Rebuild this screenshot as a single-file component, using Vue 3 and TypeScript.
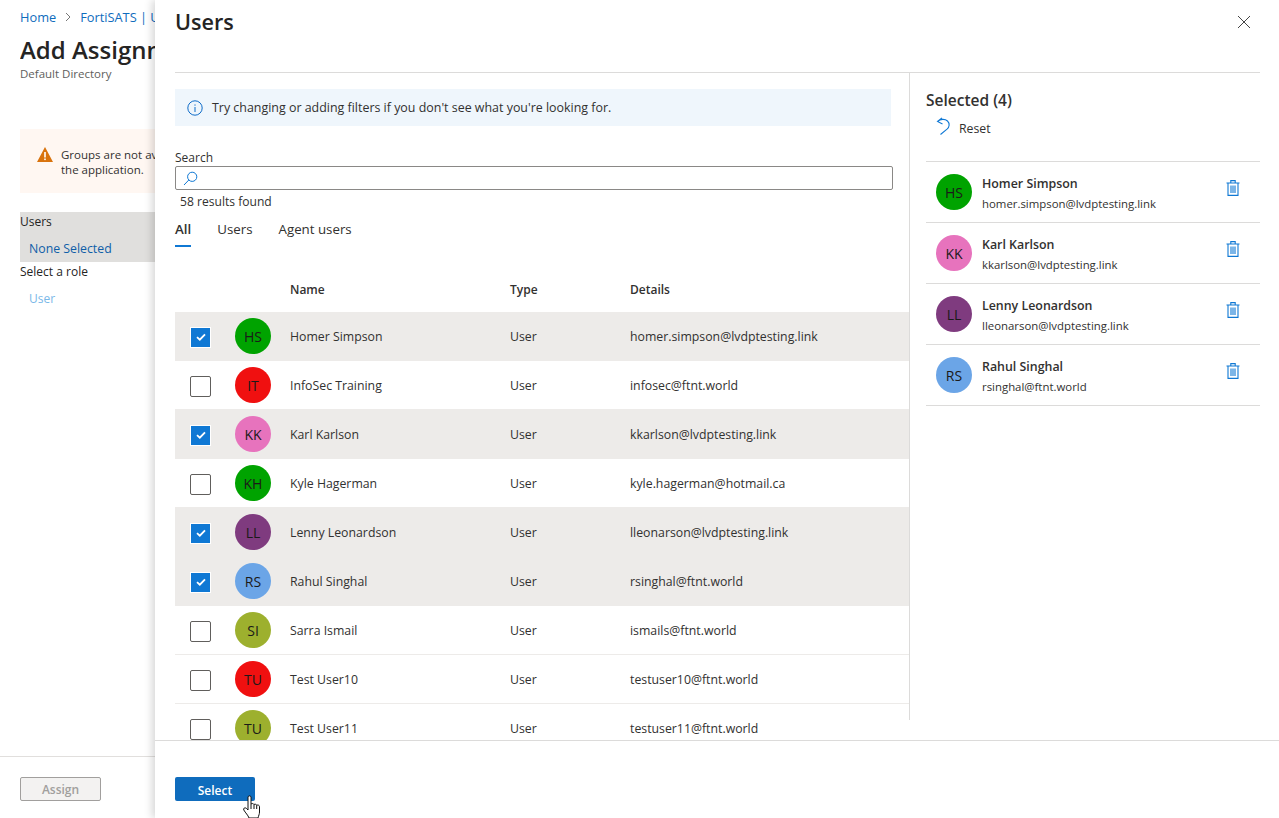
<script setup lang="ts">
interface Person { initials: string; name: string; email: string; color: string; selected: boolean }
const people: Person[] = [
  { initials: 'HS', name: 'Homer Simpson', email: 'homer.simpson@lvdptesting.link', color: '#00a300', selected: true },
  { initials: 'IT', name: 'InfoSec Training', email: 'infosec@ftnt.world', color: '#f01010', selected: false },
  { initials: 'KK', name: 'Karl Karlson', email: 'kkarlson@lvdptesting.link', color: '#e773bd', selected: true },
  { initials: 'KH', name: 'Kyle Hagerman', email: 'kyle.hagerman@hotmail.ca', color: '#00a300', selected: false },
  { initials: 'LL', name: 'Lenny Leonardson', email: 'lleonarson@lvdptesting.link', color: '#7f3b7f', selected: true },
  { initials: 'RS', name: 'Rahul Singhal', email: 'rsinghal@ftnt.world', color: '#6ba5e7', selected: true },
  { initials: 'SI', name: 'Sarra Ismail', email: 'ismails@ftnt.world', color: '#9db02e', selected: false },
  { initials: 'TU', name: 'Test User10', email: 'testuser10@ftnt.world', color: '#f01010', selected: false },
  { initials: 'TU', name: 'Test User11', email: 'testuser11@ftnt.world', color: '#9db02e', selected: false },
]
const chosen = people.filter((p) => p.selected)
</script>

<template>
  <div class="page">
    <section class="back">
      <nav class="crumbs">
        <span class="link">Home</span>
        <svg class="chev" width="8" height="10" viewBox="0 0 8 10"><path d="M2 1l4 4-4 4" fill="none" stroke="#777" stroke-width="1" /></svg>
        <span class="link clip">FortiSATS | Users and groups</span>
      </nav>
      <h1>Add Assignment</h1>
      <div class="dir">Default Directory</div>
      <div class="warn">
        <svg width="16" height="15" viewBox="0 0 16 15"><path d="M8 0l8 15H0z" fill="#d9730d" /><rect x="7.2" y="5" width="1.6" height="5.500" fill="#fff" /><rect x="7.2" y="11.500" width="1.6" height="1.6" fill="#fff" /></svg>
        <div class="warn-text">Groups are not available for assignment due to your Active Directory plan level.<br />the application.</div>
      </div>
      <div class="pick">
        <div class="pick-label">Users</div>
        <div class="pick-value">None Selected</div>
      </div>
      <div class="role-label">Select a role</div>
      <div class="role-value">User</div>
      <div class="back-spacer"></div>
      <footer class="back-foot">
        <button class="assign">Assign</button>
      </footer>
    </section>

    <aside class="panel">
      <header class="head">
        <h2>Users</h2>
        <svg class="close" width="14" height="14" viewBox="0 0 14 14"><path d="M1 1l12 12M13 1L1 13" stroke="#444" stroke-width="1" fill="none" /></svg>
      </header>
      <div class="body">
        <div class="left">
          <div class="info">
            <svg width="16" height="16" viewBox="0 0 16 16"><circle cx="8" cy="8" r="7.2" fill="none" stroke="#0f6cc8" stroke-width="1" /><rect x="7.500" y="7" width="1" height="5" fill="#0f6cc8" /><rect x="7.500" y="4.400" width="1" height="1.300" fill="#0f6cc8" /></svg>
            <span>Try changing or adding filters if you don't see what you're looking for.</span>
          </div>
          <label class="search-label">Search</label>
          <div class="search">
            <svg width="15" height="15" viewBox="0 0 15 15"><circle cx="9.200" cy="5.800" r="4.600" fill="none" stroke="#0f78d4" stroke-width="1" /><path d="M5.800 9L1 14" stroke="#0f78d4" stroke-width="1" fill="none" /></svg>
          </div>
          <div class="count">58 results found</div>
          <div class="tabs">
            <span class="tab on">All</span>
            <span class="tab">Users</span>
            <span class="tab">Agent users</span>
          </div>
          <div class="thead">
            <span class="c-check"></span>
            <span class="c-av"></span>
            <span class="c-name">Name</span>
            <span class="c-type">Type</span>
            <span>Details</span>
          </div>
          <div
            v-for="p in people"
            :key="p.email"
            class="row"
            :class="{ sel: p.selected }"
          >
            <span class="c-check">
              <span class="box" :class="{ checked: p.selected }">
                <svg v-if="p.selected" width="10" height="8" viewBox="0 0 10 8"><path d="M1 4.200l2.800 2.500L9 1.300" fill="none" stroke="#fff" stroke-width="1.800" /></svg>
              </span>
            </span>
            <span class="c-av"><span class="avatar" :style="{ background: p.color }">{{ p.initials }}</span></span>
            <span class="c-name">{{ p.name }}</span>
            <span class="c-type">User</span>
            <span>{{ p.email }}</span>
          </div>
        </div>
        <div class="right">
          <h3>Selected (4)</h3>
          <div class="reset">
            <svg class="reset-icon" width="14" height="18" viewBox="0 0 14 18"><path d="M6 .8L1.500 4.500 6.500 7M1.500 4.500C4.500 1.800 9 1.800 11.500 4c2.500 2.500 2 6-.5 8.200L4.500 17.500" fill="none" stroke="#0f78d4" stroke-width="1.100" /></svg>
            <span>Reset</span>
          </div>
          <div class="chosen">
            <div v-for="p in chosen" :key="p.email" class="chosen-row">
              <span class="avatar" :style="{ background: p.color }">{{ p.initials }}</span>
              <div class="who">
                <div class="who-name">{{ p.name }}</div>
                <div class="who-mail">{{ p.email }}</div>
              </div>
              <svg class="trash" width="14" height="16" viewBox="0 0 14 16"><path d="M.5 3h13M4.800 3V.6h4.400V3M2 3v12.400h10V3M5 5.500v7.500M7 5.500v7.500M9 5.500v7.500" fill="none" stroke="#0f78d4" stroke-width="1.100" /></svg>
            </div>
          </div>
        </div>
      </div>
      <footer class="foot">
        <button class="select">Select</button>
      </footer>
    </aside>

    <svg class="cursor" width="18" height="24" viewBox="0 0 18 24"><path d="M5 2C5 .5 8 .5 8 2v7c1-.8 2.500-.5 3 .5 1-.6 2.300-.3 2.700.7 1.200-.5 2.800 0 2.800 1.500V17c0 2-.8 3.500-1.500 6H6c-1-3-3.500-5-5.200-8-.8-1.500 1-3 2.500-1.700L5 15z" fill="#fff" stroke="#111" stroke-width="1" stroke-linejoin="round" /><path d="M8 9v5M11 9.500V14M13.700 10.200V14" fill="none" stroke="#111" stroke-width="1" /></svg>
  </div>
</template>

<style>
html, body { margin: 0; overflow: hidden; }
</style>

<style scoped>
.page {
  position: relative;
  width: 1279px;
  height: 818px;
  overflow: hidden;
  background: #fff;
  font-family: "Open Sans", "Noto Sans", sans-serif;
  font-size: 12px;
  color: #323130;
}
.back {
  display: flex;
  flex-direction: column;
  width: 155px;
  height: 818px;
  box-sizing: border-box;
  padding-top: 8px;
  overflow: hidden;
}
.crumbs {
  display: flex;
  align-items: center;
  gap: 8px;
  padding-left: 20px;
  height: 18px;
  font-size: 12.800px;
  white-space: nowrap;
}
.link { color: #0f6cbd; }
.clip { flex: 1; min-width: 0; overflow: hidden; }
h1 {
  margin: 8px 0 0 20px;
  font-size: 24px;
  line-height: 32px;
  font-weight: 600;
  white-space: nowrap;
  overflow: hidden;
  color: #252423;
}
.dir { margin: 0 0 0 20px; font-size: 11.500px; line-height: 16px; color: #605e5c; }
.warn {
  display: flex;
  gap: 8px;
  margin: 47px 0 0 20px;
  height: 64px;
  box-sizing: border-box;
  padding: 18px 0 0 17px;
  background: #fff7f2;
  font-size: 11.500px;
  line-height: 15px;
  white-space: nowrap;
}
.warn svg { flex: none; }
.warn-text { flex: 1; min-width: 0; overflow: hidden; }
.pick { margin: 19px 0 0 20px; height: 50px; background: #e0dfdd; }
.pick-label { line-height: 20px; color: #252423; }
.pick-value { margin: 8px 0 0 9px; line-height: 18px; font-size: 12.300px; color: #0f5ea8; white-space: nowrap; }
.role-label { margin: 0 0 0 20px; line-height: 20px; color: #252423; }
.role-value { margin: 8px 0 0 29px; line-height: 18px; color: #7ab8e8; }
.back-spacer { flex: 1; }
.back-foot { height: 62px; box-sizing: border-box; border-top: 1px solid #e1dfdd; padding: 20px 0 0 20px; }
.assign {
  display: block;
  width: 81px;
  height: 24px;
  padding: 0;
  border: 1px solid #a19f9d;
  border-radius: 2px;
  background: #f3f2f1;
  color: #a19f9d;
  font: 600 12px "Open Sans", sans-serif;
}
.panel {
  position: absolute;
  left: 155px;
  top: 0;
  width: 1124px;
  height: 818px;
  display: flex;
  flex-direction: column;
  background: #fff;
  box-shadow: -3px 0 8px rgba(0, 0, 0, 0.16);
}
.head {
  position: relative;
  height: 73px;
  box-sizing: border-box;
  margin: 0 19px 0 20px;
  border-bottom: 1px solid #dcdbda;
  flex: none;
}
h2 {
  margin: 0;
  padding-top: 5px;
  font-size: 21.600px;
  line-height: 34px;
  font-weight: 600;
  color: #252423;
}
.close { position: absolute; right: 9px; top: 15px; }
.body { display: flex; height: 667px; flex: none; overflow: hidden; }
.left {
  width: 735px;
  margin-left: 20px;
  height: 647px;
  flex: none;
  box-sizing: border-box;
  border-right: 1px solid #dcdbda;
  padding-top: 16px;
}
.info {
  display: flex;
  align-items: center;
  gap: 9px;
  width: 716px;
  height: 37px;
  box-sizing: border-box;
  padding-left: 12px;
  background: #eff6fc;
  font-size: 12.430px;
  white-space: nowrap;
}
.search-label { display: block; margin-top: 23px; line-height: 17px; color: #323130; }
.search {
  display: flex;
  align-items: center;
  width: 718px;
  height: 24px;
  box-sizing: border-box;
  border: 1px solid #8a8886;
  border-radius: 2px;
  padding-left: 7px;
}
.count { margin: 3px 0 0 5px; line-height: 17px; font-size: 12.100px; }
.tabs { display: flex; gap: 26px; margin-top: 1px; height: 36px; font-size: 13.300px; }
.tab { line-height: 36px; height: 36px; box-sizing: border-box; }
.tab.on { font-weight: 600; border-bottom: 2px solid #0f78d4; }
.thead {
  display: flex;
  align-items: center;
  margin: 22px 0 3px;
  height: 40px;
  font-weight: 600;
}
.row {
  display: flex;
  align-items: center;
  height: 48px;
  border-bottom: 1px solid #edebe9;
  white-space: nowrap;
  width: 734px;
  font-size: 12.300px;
}
.row.sel { background: #edebe9; }
.c-check { width: 60px; flex: none; display: flex; padding-left: 15px; box-sizing: border-box; }
.c-av { width: 55px; flex: none; display: flex; }
.c-name { width: 220px; flex: none; }
.c-type { width: 120px; flex: none; }
.box {
  width: 21px;
  height: 21px;
  margin-top: 2px;
  box-sizing: border-box;
  border: 1px solid #605e5c;
  border-radius: 2px;
  background: #fff;
  display: flex;
  align-items: center;
  justify-content: center;
}
.box.checked { background: #0f78d4; border: 1px solid #fff; border-radius: 0; }
.avatar {
  width: 36px;
  height: 36px;
  flex: none;
  border-radius: 50%;
  display: flex;
  align-items: center;
  justify-content: center;
  font-size: 14px;
  color: #1b1a19;
}
.right { width: 334px; margin-left: 16px; flex: none; }
h3 {
  margin: 17px 0 0;
  font-size: 15.500px;
  line-height: 20px;
  font-weight: 600;
  color: #323130;
}
.reset { display: flex; align-items: center; gap: 9px; padding-left: 10px; height: 36px; font-size: 12.300px; }
.reset-icon { margin-top: -4px; }
.chosen { margin-top: 15px; border-top: 1px solid #dcdbda; }
.chosen-row {
  display: flex;
  align-items: center;
  height: 60px;
  padding-left: 10px;
  border-bottom: 1px solid #dcdbda;
}
.who { margin: 3px 0 0 10px; flex: 1; white-space: nowrap; }
.who-name { font-weight: 600; line-height: 20px; font-size: 12.400px; }
.who-mail { line-height: 19px; font-size: 11.400px; }
.trash { margin: 0 20px 8px 0; }
.foot {
  height: 78px;
  flex: none;
  border-top: 1px solid #dcdbda;
  padding: 36px 0 0 20px;
  box-sizing: border-box;
  background: #fff;
  position: relative;
}
.select {
  display: block;
  width: 80px;
  height: 24px;
  padding: 2px 0 0;
  border: none;
  border-radius: 2px;
  background: #0f6cbd;
  color: #fff;
  font: 600 12px "Open Sans", sans-serif;
}
.cursor { position: absolute; left: 243px; top: 795px; }
</style>
